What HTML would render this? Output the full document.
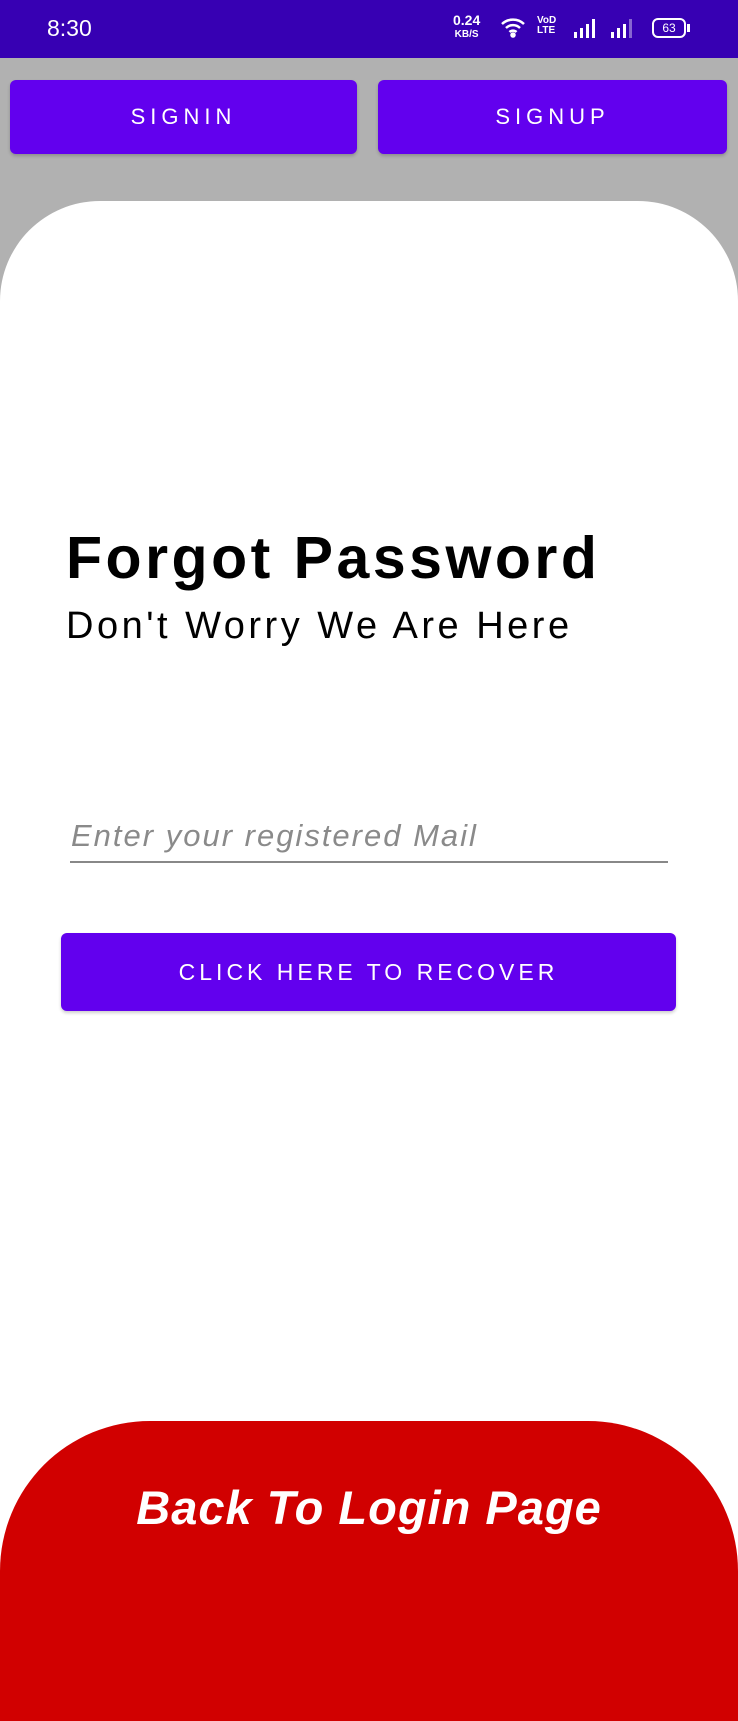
<!DOCTYPE html>
<html><head><meta charset="utf-8"><style>
*{margin:0;padding:0;box-sizing:border-box}
body{width:738px;height:1600px;background:#b1b1b1;position:relative;overflow:hidden;font-family:"Liberation Sans",sans-serif}
.sb{position:absolute;left:0;top:0;width:738px;height:58px;background:#3700b3;color:#fff}
.btn{position:absolute;background:#6200ee;border-radius:6px;color:#fff;text-align:center;box-shadow:0 2px 3px rgba(0,0,0,.2)}
.card{position:absolute;left:0;top:201px;width:738px;height:1420px;background:#fff;border-radius:100px 100px 0 0}
.red{position:absolute;left:0;top:1421px;width:738px;height:300px;background:#d10000;border-radius:150px 150px 0 0}
</style></head><body>
<div class="sb">
<div style="position:absolute;left:47px;top:15px;font-size:23px">8:30</div>
<div style="position:absolute;left:453px;top:14px;font-size:14px;font-weight:bold;line-height:12px;text-align:center">0.24<br><span style="font-size:10px">KB/S</span></div>
<svg style="position:absolute;left:500px;top:16px" width="26" height="22" viewBox="0 0 26 22" fill="none" stroke="#fff" stroke-width="2.5"><path d="M2 8a16 16 0 0 1 22 0M6 12a10 10 0 0 1 14 0M9.5 16a5 5 0 0 1 7 0"/><circle cx="13" cy="19" r="1.5" fill="#fff"/></svg>
<div style="position:absolute;left:537px;top:16px;font-size:10px;font-weight:bold;line-height:10px">VoD<br>LTE</div>
<svg style="position:absolute;left:574px;top:18px" width="70" height="22" viewBox="0 0 70 22" fill="#fff"><rect x="0" y="14" width="3" height="6"/><rect x="6" y="10" width="3" height="10"/><rect x="12" y="6" width="3" height="14"/><rect x="18" y="1" width="3" height="19"/><rect x="37" y="14" width="3" height="6"/><rect x="43" y="10" width="3" height="10"/><rect x="49" y="6" width="3" height="14"/><rect x="55" y="1" width="3" height="19" opacity=".4"/></svg>
<div style="position:absolute;left:652px;top:18px;width:34px;height:20px;border:2px solid #fff;border-radius:6px;font-size:12px;text-align:center;line-height:16px">63</div>
<div style="position:absolute;left:687px;top:24px;width:3px;height:8px;background:#fff"></div>
</div>
<div class="btn" style="left:10px;top:80px;width:347px;height:74px;line-height:74px;font-size:22px;letter-spacing:5px">SIGNIN</div>
<div class="btn" style="left:378px;top:80px;width:349px;height:74px;line-height:74px;font-size:22px;letter-spacing:5px">SIGNUP</div>
<div class="card"></div>
<div style="position:absolute;left:66px;top:524px;font-size:59px;font-weight:bold;letter-spacing:3.5px;color:#000">Forgot Password</div>
<div style="position:absolute;left:66px;top:605px;font-size:38px;letter-spacing:3.5px;color:#000">Don't Worry We Are Here</div>
<div style="position:absolute;left:71px;top:818px;font-size:31px;color:#8a8a8a;letter-spacing:2px;font-style:italic">Enter your registered Mail</div>
<div style="position:absolute;left:70px;top:861px;width:598px;height:2px;background:#888"></div>
<div class="btn" style="left:61px;top:933px;width:615px;height:78px;line-height:78px;font-size:23px;letter-spacing:4px">CLICK HERE TO RECOVER</div>
<div class="red"></div>
<div style="position:absolute;left:0;top:1480px;width:738px;text-align:center;color:#fff;font-size:47px;font-weight:bold;font-style:italic;letter-spacing:1px">Back To Login Page</div>
</body></html>
